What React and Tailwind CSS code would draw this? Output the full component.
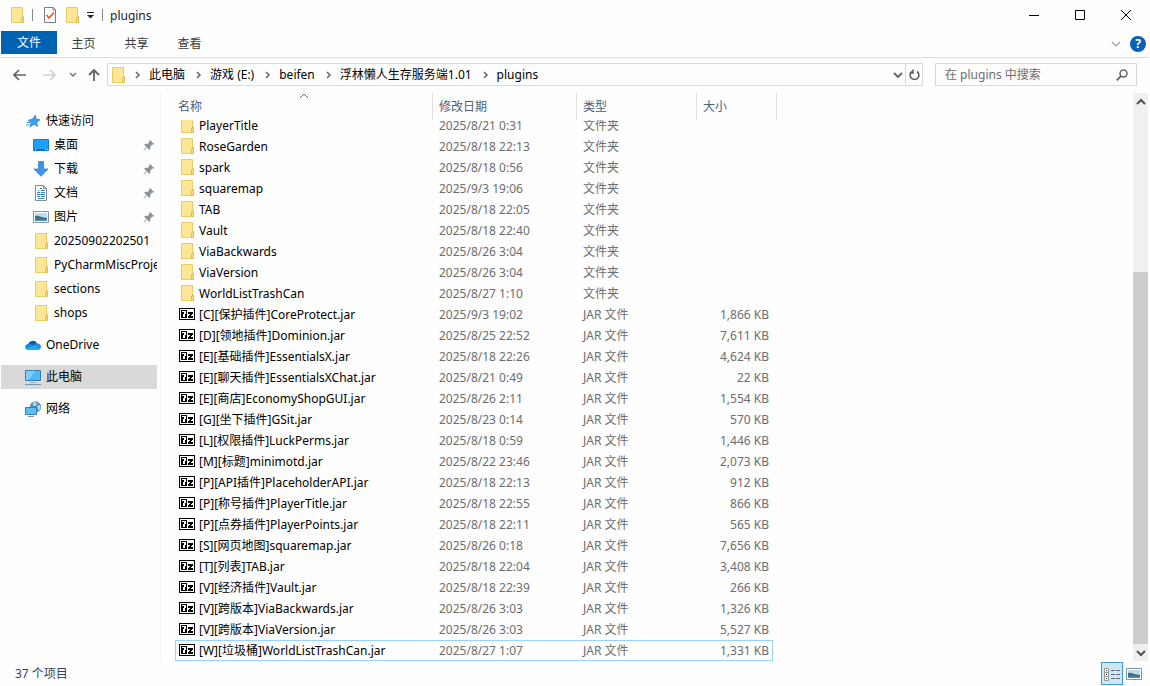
import React, { useState } from "react";

const folders = [
  { name: "PlayerTitle", date: "2025/8/21 0:31" },
  { name: "RoseGarden", date: "2025/8/18 22:13" },
  { name: "spark", date: "2025/8/18 0:56" },
  { name: "squaremap", date: "2025/9/3 19:06" },
  { name: "TAB", date: "2025/8/18 22:05" },
  { name: "Vault", date: "2025/8/18 22:40" },
  { name: "ViaBackwards", date: "2025/8/26 3:04" },
  { name: "ViaVersion", date: "2025/8/26 3:04" },
  { name: "WorldListTrashCan", date: "2025/8/27 1:10" },
];

const jars = [
  { name: "[C][保护插件]CoreProtect.jar", date: "2025/9/3 19:02", size: "1,866 KB" },
  { name: "[D][领地插件]Dominion.jar", date: "2025/8/25 22:52", size: "7,611 KB" },
  { name: "[E][基础插件]EssentialsX.jar", date: "2025/8/18 22:26", size: "4,624 KB" },
  { name: "[E][聊天插件]EssentialsXChat.jar", date: "2025/8/21 0:49", size: "22 KB" },
  { name: "[E][商店]EconomyShopGUI.jar", date: "2025/8/26 2:11", size: "1,554 KB" },
  { name: "[G][坐下插件]GSit.jar", date: "2025/8/23 0:14", size: "570 KB" },
  { name: "[L][权限插件]LuckPerms.jar", date: "2025/8/18 0:59", size: "1,446 KB" },
  { name: "[M][标题]minimotd.jar", date: "2025/8/22 23:46", size: "2,073 KB" },
  { name: "[P][API插件]PlaceholderAPI.jar", date: "2025/8/18 22:13", size: "912 KB" },
  { name: "[P][称号插件]PlayerTitle.jar", date: "2025/8/18 22:55", size: "866 KB" },
  { name: "[P][点券插件]PlayerPoints.jar", date: "2025/8/18 22:11", size: "565 KB" },
  { name: "[S][网页地图]squaremap.jar", date: "2025/8/26 0:18", size: "7,656 KB" },
  { name: "[T][列表]TAB.jar", date: "2025/8/18 22:04", size: "3,408 KB" },
  { name: "[V][经济插件]Vault.jar", date: "2025/8/18 22:39", size: "266 KB" },
  { name: "[V][跨版本]ViaBackwards.jar", date: "2025/8/26 3:03", size: "1,326 KB" },
  { name: "[V][跨版本]ViaVersion.jar", date: "2025/8/26 3:03", size: "5,527 KB" },
  { name: "[W][垃圾桶]WorldListTrashCan.jar", date: "2025/8/27 1:07", size: "1,331 KB" },
];

const files = [
  ...folders.map((f) => ({ ...f, type: "文件夹", size: "" })),
  ...jars.map((f) => ({ ...f, type: "JAR 文件" })),
];

const crumbs = ["此电脑", "游戏 (E:)", "beifen", "浮林懒人生存服务端1.01", "plugins"];

const FolderIcon = () => (
  <svg width="16" height="16" viewBox="0 0 16 16" className="shrink-0">
    <path d="M2.500.5h11v9.500h1v5.500h-12z" fill="#ffe695" stroke="#ebca68" />
    <path d="M12.500 15.500v-4.500l2-1.500v6z" fill="#fbdc7c" stroke="#e3bd52" />
  </svg>
);

const SevenZipIcon = () => (
  <svg width="16" height="16" viewBox="0 0 16 16" shapeRendering="crispEdges" className="shrink-0">
    <path d="M0 2h16v12H0z" fill="#000" />
    <path d="M1 3h14v10H1z" fill="#fff" />
    <path d="M2 4h6v8H2z" fill="#000" />
    <path d="M3 5h4v3H6v3H4V8h1V6H3z" fill="#fff" />
    <path d="M9 6h5v2h-1v1h-1v1h2v2H9v-2h1V9h1V8H9z" fill="#000" />
  </svg>
);

const StarIcon = () => (
  <svg width="16" height="16" viewBox="0 0 16 16" className="shrink-0">
    <path d="M10.500 2l.5 4 4 .8-3.300 2.400.8 4.300-3.500-2.300L5 14l1-4.200L3.500 7l3.800-.7z" fill="#36a0f0" stroke="#2479c6" strokeWidth=".7" />
    <path d="M2 9.500h3M1 12h3.500M3 7.500h2" stroke="#3d9be9" />
  </svg>
);

const DesktopIcon = () => (
  <svg width="16" height="16" viewBox="0 0 16 16" className="shrink-0">
    <path d="M.5 2.500h15v11H.5z" fill="#1ba1f7" stroke="#0b7fd0" />
    <path d="M1 12.500h14" stroke="#0769b0" />
    <path d="M2 12.500h1M12 12.500h1M14 12.500h1" stroke="#fff" />
  </svg>
);

const DownloadIcon = () => (
  <svg width="16" height="16" viewBox="0 0 16 16" className="shrink-0">
    <path d="M5.500.500h5v7.500h4.500L8 15.300 1 8h4.500z" fill="#3f94e4" stroke="#2878c5" strokeWidth=".7" />
  </svg>
);

const DocumentIcon = () => (
  <svg width="16" height="16" viewBox="0 0 16 16" className="shrink-0">
    <path d="M2.500.5h8l3 3v12h-11z" fill="#fff" stroke="#858b90" />
    <path d="M10.500.5v3h3" fill="none" stroke="#858b90" />
    <path d="M7 3.500h2M5 5.500h1M8 5.500h4M4 7.500h3M8 7.500h4M4 9.500h8M4 11.500h3M8 11.500h4M5 13.500h6" stroke="#3584c4" />
  </svg>
);

const PictureIcon = () => (
  <svg width="16" height="16" viewBox="0 0 16 16" className="shrink-0">
    <path d="M.5 2.500h15v11H.5z" fill="#fff" stroke="#8d9498" />
    <path d="M2 4h12v8H2z" fill="#b9dcf3" />
    <path d="M2 7c3-1 6 1.500 12 2v3H2z" fill="#3f6f80" />
    <path d="M2 10.500h12V12H2z" fill="#4b91c4" />
  </svg>
);

const OneDriveIcon = () => (
  <svg width="16" height="16" viewBox="0 0 16 16" className="shrink-0">
    <path d="M3.200 7A5 5 0 0 1 12 6l-4 5H1z" fill="#0a5cab" />
    <path d="M9 8.500a3.500 3.500 0 0 1 4-2 3.400 3.400 0 0 1 2.500 5L10 13z" fill="#1b8fe0" />
    <path d="M3.500 7a3.200 3.200 0 0 1 3.500.5L14.500 12a3 3 0 0 1-1.800 1H3.200a3 3 0 0 1 .3-6z" fill="#1489d8" />
    <path d="M1 11.500L9 8.200l6 3.300a2.500 2.500 0 0 1-2.300 1.500H3.200A3 3 0 0 1 1 11.500z" fill="#28a8ea" />
  </svg>
);

const ComputerIcon = () => (
  <svg width="16" height="16" viewBox="0 0 16 16" className="shrink-0">
    <path d="M.5 1.500h15v10H.5z" fill="#4db8fa" stroke="#3a7ba8" />
    <path d="M1 2h9L4 11H1z" fill="#7cd0ff" />
    <path d="M5 13.500h6" stroke="#a9b4bc" />
    <path d="M0 15.500h16" stroke="#7e95a5" />
  </svg>
);

const NetworkIcon = () => (
  <svg width="16" height="16" viewBox="0 0 16 16" className="shrink-0">
    <circle cx="10.500" cy="6" r="5.300" fill="#4a93bd" stroke="#4b7894" strokeWidth=".6" />
    <path d="M8 2l3-1 1 2-2 2-2-.5zM12 5l3-1 .5 3-2 3z" fill="#b5dcec" />
    <path d="M.5 6.500h11v7H.5z" fill="#58bdfa" stroke="#3a7fb4" />
    <path d="M3 15.500h6" stroke="#7e95a5" />
  </svg>
);

const PinIcon = () => (
  <svg width="12" height="12" viewBox="0 0 12 12" className="shrink-0">
    <path d="M7 1l4 4-1 .8-.8-.2-2 2.200.1 2.200-.9.9-2.300-2.300L1 11.500l-.5-.5 3-3L1.200 5.700l.9-.9 2.300.1 2-2-.2-1z" fill="#8b9299" />
  </svg>
);

const Chevron = ({ d, width = 10, height = 10, color = "#5f5f5f", stroke = 1.5 }) => (
  <svg width={width} height={height} viewBox={`0 0 ${width} ${height}`} fill="none" stroke={color} strokeWidth={stroke}>
    <path d={d} />
  </svg>
);

const quickLinks = [
  { label: "桌面", icon: DesktopIcon, pinned: true },
  { label: "下载", icon: DownloadIcon, pinned: true },
  { label: "文档", icon: DocumentIcon, pinned: true },
  { label: "图片", icon: PictureIcon, pinned: true },
  { label: "20250902202501", icon: FolderIcon },
  { label: "PyCharmMiscProject", icon: FolderIcon },
  { label: "sections", icon: FolderIcon },
  { label: "shops", icon: FolderIcon },
];

const TitleBar = () => (
  <header className="flex h-[30px] items-center">
    <div className="flex flex-1 items-center pl-2">
      <FolderIcon />
      <span className="ml-[7px] h-3 w-px bg-[#8a8a8a]" />
      <button aria-label="属性" className="ml-[9px]">
        <svg width="16" height="16" viewBox="0 0 16 16">
          <path d="M2.500.5h9l2 2v13h-11z" fill="#fff" stroke="#7d7d7d" />
          <path d="M11 .5v2.500h2.500" fill="none" stroke="#7d7d7d" />
          <path d="M4.500 8l2.500 3L12 5.500" fill="none" stroke="#e3622c" strokeWidth="1.800" />
        </svg>
      </button>
      <button aria-label="新建文件夹" className="ml-[6px]">
        <FolderIcon />
      </button>
      <button aria-label="自定义快速访问工具栏" className="ml-[7px]">
        <svg width="8" height="8" viewBox="0 0 8 8">
          <path d="M0 1.500h7" stroke="#222" />
          <path d="M0 4h7L3.500 7.500z" fill="#222" />
        </svg>
      </button>
      <span className="ml-[7px] h-3 w-px bg-[#8a8a8a]" />
      <h1 className="ml-[7px] pt-[2px]">plugins</h1>
    </div>
    <button aria-label="最小化" className="flex w-[46px] justify-center">
      <Chevron d="M0 5.500h10" color="#000" stroke={1} />
    </button>
    <button aria-label="最大化" className="flex w-[46px] justify-center">
      <Chevron d="M.5.5h9v9h-9z" color="#000" stroke={1} />
    </button>
    <button aria-label="关闭" className="flex w-[46px] justify-center">
      <Chevron d="M0 0l10 10M10 0L0 10" color="#000" stroke={1} />
    </button>
  </header>
);

const Ribbon = () => (
  <nav className="flex h-7 border-b border-[#dadbdc] pt-px text-[#3c3c3c]">
    <button className="h-[23px] w-14 bg-[#0063b1] pt-px text-white">文件</button>
    {["主页", "共享", "查看"].map((tab) => (
      <button key={tab} className="h-[26px] w-[53px]">
        {tab}
      </button>
    ))}
    <div className="ml-auto flex items-center gap-[9px] pr-[3px]">
      <button aria-label="展开功能区">
        <Chevron d="M1 3l4 4 4-4" color="#9a9a9a" stroke={1.2} />
      </button>
      <button
        aria-label="帮助"
        className="flex size-4 items-center justify-center rounded-full bg-[#0a62b5] font-bold text-white"
      >
        ?
      </button>
    </div>
  </nav>
);

const AddressBar = () => {
  const [query, setQuery] = useState("");

  return (
    <div className="flex h-[35px] items-center pb-[2px] pr-[12px]">
      <div className="flex w-[106px] items-center pl-3">
        <button aria-label="后退">
          <Chevron d="M1 7h12M6 2L1 7l5 5" width={14} height={14} color="#636363" stroke={1.7} />
        </button>
        <button aria-label="前进" className="ml-4">
          <Chevron d="M0 7h12M7 2l5 5-5 5" width={14} height={14} color="#d0d0d0" stroke={1.7} />
        </button>
        <button aria-label="最近浏览的位置" className="ml-3">
          <Chevron d="M1 2l3 3 3-3" width={8} height={8} color="#777" />
        </button>
        <button aria-label="上移" className="ml-[10px]">
          <Chevron d="M7 13V2M2 7l5-5 5 5" width={14} height={14} color="#636363" stroke={1.8} />
        </button>
      </div>
      <div className="flex h-[23px] flex-1 items-center border border-[#d9d9d9] pl-[2px]">
        <FolderIcon />
        {crumbs.map((crumb) => (
          <React.Fragment key={crumb}>
            <span className="flex w-[23px] justify-center">
              <Chevron d="M2 1l3 3-3 3" width={7} height={8} color="#666" />
            </span>
            <a href="#" className="whitespace-nowrap pr-[2px] text-black">
              {crumb}
            </a>
          </React.Fragment>
        ))}
        <button aria-label="以前的位置" className="ml-auto mr-[2px]">
          <Chevron d="M1 3l4 4 4-4" stroke={1.8} />
        </button>
        <button
          aria-label="刷新"
          className="flex h-[21px] w-[17px] items-center justify-center border-l border-[#d9d9d9]"
        >
          <Chevron d="M3 2.500a4.400 4.400 0 1 0 5 0M4 .500v3.500H.500" width={11} height={12} stroke={1.6} />
        </button>
      </div>
      <label className="ml-3 flex h-[23px] w-[202px] items-center border border-[#d9d9d9] pl-[9px] pr-2">
        <input
          type="text"
          aria-label="搜索"
          value={query}
          onChange={(e) => setQuery(e.target.value)}
          placeholder="在 plugins 中搜索"
          className="min-w-0 flex-1 outline-none placeholder:text-[#6d6d6d]"
        />
        <svg width="12" height="12" viewBox="0 0 12 12" fill="none" stroke="#666" strokeWidth="1.500">
          <circle cx="7.500" cy="4.500" r="3.500" />
          <path d="M5 7L.7 11.300" strokeWidth="1.800" />
        </svg>
      </label>
    </div>
  );
};

const Sidebar = () => (
  <aside className="w-[156px] shrink-0 overflow-hidden pt-4 text-black">
    <a href="#" className="flex h-6 items-center gap-[5px] pl-6">
      <StarIcon />
      快速访问
    </a>
    {quickLinks.map(({ label, icon: Icon, pinned }) => (
      <a key={label} href="#" className="flex h-6 items-center gap-[5px] whitespace-nowrap pl-8">
        <Icon />
        {label}
        {pinned && (
          <span className="ml-auto pr-[2px]">
            <PinIcon />
          </span>
        )}
      </a>
    ))}
    <a href="#" className="mt-2 flex h-6 items-center gap-[5px] pl-6">
      <OneDriveIcon />
      OneDrive
    </a>
    <a href="#" className="mt-2 flex h-6 items-center gap-[5px] bg-[#d9d9d9] pl-6">
      <ComputerIcon />
      此电脑
    </a>
    <a href="#" className="mt-2 flex h-6 items-center gap-[5px] pl-6">
      <NetworkIcon />
      网络
    </a>
  </aside>
);

const FileList = () => {
  const [selected, setSelected] = useState(files.length - 1);

  return (
    <table className="flex min-h-0 flex-1 flex-col pl-[14px]">
      <thead className="block">
        <tr className="grid h-[27px] grid-cols-[258px_144px_120px_80px] text-[#4c607a]">
          <th className="relative border-r border-[#e2e2e2] pl-[3px] pt-1 text-left font-normal leading-[20px]">
            名称
            <span className="absolute left-1/2 top-0 -translate-x-1/2">
              <Chevron d="M1 5l4-4 4 4" height={6} color="#666" stroke={1} />
            </span>
          </th>
          {["修改日期", "类型", "大小"].map((title) => (
            <th key={title} className="border-r border-[#e2e2e2] pl-[6px] pt-1 text-left font-normal leading-[20px]">
              {title}
            </th>
          ))}
        </tr>
      </thead>
      {/* keeps the last rows in view, the first one slides under the header */}
      <tbody className="flex min-h-0 flex-1 flex-col justify-end overflow-hidden">
        {files.map((file, i) => (
          <tr
            key={file.name}
            onClick={() => setSelected(i)}
            className={`grid h-[21px] w-[598px] shrink-0 grid-cols-[258px_144px_120px_76px] items-center text-[#6d6d6d] ${
              selected === i ? "outline outline-1 -outline-offset-1 outline-[#99d1ff]" : ""
            }`}
          >
            <td className="flex items-center gap-1 whitespace-nowrap pl-1 text-black">
              <span className="h-[17px] w-4">{file.size ? <SevenZipIcon /> : <FolderIcon />}</span>
              {file.name}
            </td>
            <td className="pl-[6px]">{file.date}</td>
            <td className="pl-[6px]">{file.type}</td>
            <td className="pr-1 text-right">{file.size}</td>
          </tr>
        ))}
      </tbody>
    </table>
  );
};

const Scrollbar = () => (
  <div className="mr-px flex w-[15px] flex-col bg-[#f0f0f0]">
    <button aria-label="向上滚动" className="flex h-[17px] items-center justify-center">
      <Chevron d="M1 7l4-4 4 4" color="#505050" stroke={2} />
    </button>
    <div className="flex flex-1 flex-col justify-end">
      <div className="h-[69.7%] bg-[#cdcdcd]" />
    </div>
    <button aria-label="向下滚动" className="flex h-[17px] items-center justify-center">
      <Chevron d="M1 3l4 4 4-4" color="#505050" stroke={2} />
    </button>
  </div>
);

const StatusBar = () => (
  <footer className="flex h-[25px] items-center pl-[14px] text-[#33415c]">
    37 个项目
    <div className="ml-auto flex items-center pr-[7px]">
      <button
        aria-label="详细信息"
        className="flex h-[23px] w-[22px] items-center justify-center border border-[#3aa0dc] bg-[#cce8f6]"
      >
        <svg width="16" height="14" viewBox="0 0 16 14" fill="none">
          <path d="M.5 1.500h4v4h-4zM.5 5.500h4v4h-4zM.5 9.500h4v4h-4z" fill="#fff" stroke="#999" />
          <path d="M2 3.500h1M2 7.500h1M2 11.500h1" stroke="#222" />
          <path d="M7 3.500h4M12 3.500h4M7 7.500h4M12 7.500h4M7 11.500h4M12 11.500h4" stroke="#667" />
        </svg>
      </button>
      <button aria-label="大缩略图" className="ml-[3px]">
        <PictureIcon />
      </button>
    </div>
  </footer>
);

const App = () => {
  return (
    <div className="flex h-screen flex-col overflow-hidden bg-[#fefefe] px-px font-['Noto_Sans','Noto_Sans_CJK_SC',sans-serif] text-[12px] leading-[16px] text-[#222]">
      <TitleBar />
      <Ribbon />
      <AddressBar />
      <div className="flex min-h-0 flex-1">
        <Sidebar />
        <main className="ml-[3px] flex min-w-0 flex-1 border-l border-[#f5f5f5]">
          <FileList />
          <Scrollbar />
        </main>
      </div>
      <StatusBar />
    </div>
  );
};

export default App;
